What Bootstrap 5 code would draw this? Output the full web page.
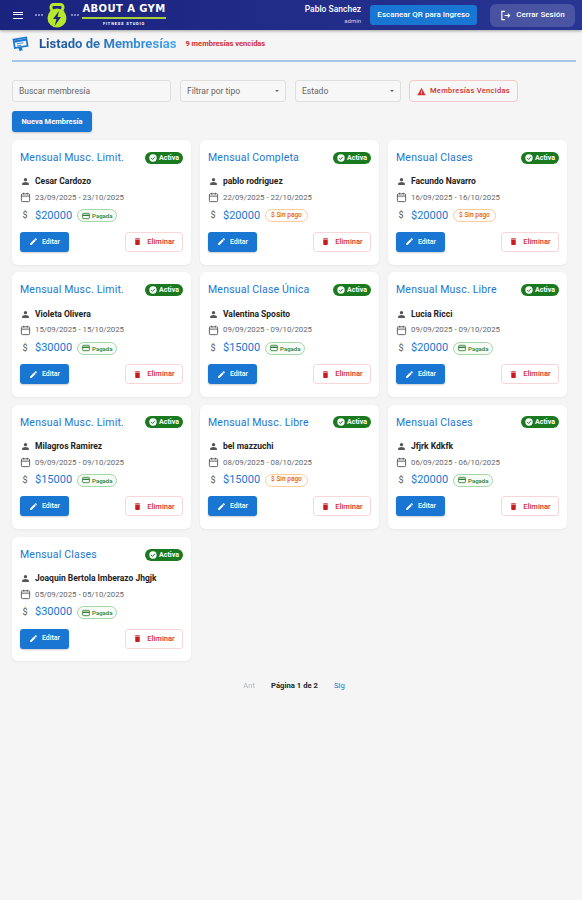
<!DOCTYPE html>
<html lang="es">
<head>
    <meta charset="UTF-8">
    <meta name="viewport" content="width=device-width, initial-scale=1.0">
    <title>Listado de Membresías</title>
    <link href="https://cdn.jsdelivr.net/npm/bootstrap@5.3.3/dist/css/bootstrap.min.css" rel="stylesheet">
    <style>
        body { background: #f5f5f5; font-family: Roboto, "Liberation Sans", sans-serif; min-height: 900px; }
        .barra-top { height: 30px; background: linear-gradient(90deg, #1a237e, #283593); box-shadow: 0 1px 3px rgba(0,0,0,.35); color: #fff; padding: 0 7px 0 13px; }
        .hamburguesa { width: 10px; height: 7px; border-top: 1.5px solid #fff; border-bottom: 1.5px solid #fff; position: relative; }
        .hamburguesa::after { content: ""; position: absolute; left: 0; right: 0; top: 1.5px; border-top: 1.5px solid #fff; }
        .logo-zona { margin-left: 12px; }
        .logo-etiqueta { width: 8px; border-top: 2px dotted #7f88c4; flex: none; }
        .logo-marca { width: 84px; margin-left: 3px; text-align: center; line-height: 1; }
        .logo-nombre { font-family: "DejaVu Sans", sans-serif; font-size: 10px; font-weight: 700; letter-spacing: .4px; white-space: nowrap; }
        .logo-linea { height: 2px; background: #a4cf3a; margin: 3px 0 3px; }
        .logo-sub { font-size: 4px; letter-spacing: .8px; font-weight: 700; }
        .usuario-txt { font-size: 8.500px; line-height: 11px; font-weight: 500; text-align: right; }
        .usuario-txt span { display: block; font-size: 6px; font-weight: 400; color: #cfd3ee; }
        .btn-qr { background: #1976d2; color: #fff; font-size: 8px; font-weight: 500; border-radius: 3px; height: 20px; width: 107px; margin-left: 9px; border: 0; padding: 0; }
        .btn-salir { background: rgba(255,255,255,.16); color: #fff; font-size: 8px; font-weight: 500; border-radius: 6px; height: 23px; width: 85px; margin-left: 13px; border: 0; padding: 0; gap: 5px; }
        .contenido { padding: 4px 6px 0 12px; }
        .titulo-fila { height: 20px; border-bottom: 2px solid #a9c6e8; padding-bottom: 6px; gap: 9px; box-sizing: content-box; margin-bottom: 18px; }
        .titulo-txt { font-size: 13.100px; font-weight: 700; margin: 0 0 0 1px; background: linear-gradient(90deg, #1a4f8f, #42a5f5); -webkit-background-clip: text; background-clip: text; color: transparent; }
        .vencidas-txt { font-size: 7.500px; font-weight: 700; color: #d32f2f; }
        .filtros { gap: 9px; margin-bottom: 9px; }
        .campo { height: 22px; background: #f7f7f7; border: 1px solid #dedede; border-radius: 3px; font-size: 8.500px; color: #666; padding: 0 6px; }
        .campo-buscar { width: 159px; }
        .campo-tipo { width: 106px; }
        .campo-estado { width: 106px; }
        .flechita { width: 0; height: 0; border-left: 2px solid transparent; border-right: 2px solid transparent; border-top: 2px solid #666; }
        .btn-vencidas { height: 22px; width: 109px; border: 1px solid #f3c9c9; border-radius: 4px; color: #d32f2f; font-size: 7.500px; font-weight: 500; letter-spacing: .3px; gap: 4px; background: #f7f7f7; margin-left: -1px; }
        .btn-nueva { background: #1976d2; color: #fff; font-size: 7.500px; font-weight: 700; height: 21px; width: 80px; border-radius: 3px; border: 0; padding: 0; box-shadow: 0 1px 2px rgba(0,0,0,.2); display: block; margin-bottom: 8px; }
        .grilla { display: grid; grid-template-columns: repeat(3, 179px); gap: 7.800px 9px; }
        .tarjeta { background: #fff; border-radius: 6px; height: 124.500px; padding: 10px 8px 0; box-shadow: 0 1px 3px rgba(0,0,0,.06); }
        .tarjeta-nombre { font-size: 10.500px; color: #1976d2; letter-spacing: .2px; }
        .estado-chip { background: #1b7a1f; color: #fff; font-size: 7px; font-weight: 700; height: 12px; width: 38px; border-radius: 6px; gap: 2px; }
        .dato { height: 16px; gap: 5px; }
        .dato-ico { width: 10px; flex: none; text-align: center; color: #555; font-size: 9px; line-height: 1; }
        .dato-persona { font-size: 8.500px; font-weight: 700; color: #222; }
        .dato-fecha { font-size: 7.800px; color: #666; }
        .dato-precio { height: 20px; margin-bottom: 6px; }
        .precio { font-size: 11px; color: #1976d2; }
        .chip-pago { height: 13px; border-radius: 7px; font-size: 6px; font-weight: 500; padding: 0 4px; gap: 2px; border: 1px solid #a5d6a7; color: #2e7d32; background: #f6fbf6; }
        .chip-pago.sin { border-color: #ffcc99; color: #e8590c; background: #fff; padding: 0 5px; font-size: 6.500px; }
        .btn-editar { background: #1976d2; color: #fff; width: 49px; height: 20px; border-radius: 3px; font-size: 7px; font-weight: 500; gap: 4px; box-shadow: 0 1px 2px rgba(0,0,0,.2); }
        .btn-eliminar { border: 1px solid #f8d7d7; color: #d32f2f; width: 58px; height: 20px; border-radius: 3px; font-size: 7.500px; font-weight: 500; gap: 5px; }
        .paginado { margin-top: 19px; gap: 16px; font-size: 7.700px; }
        .sig-link { color: #1976d2; }
    </style>
</head>
<body>
    <nav class="barra-top d-flex align-items-center">
        <div class="hamburguesa"></div>
        <div class="logo-zona d-flex align-items-center">
            <span class="logo-etiqueta"></span>
            <svg class="mx-1" width="20" height="25" viewBox="0 0 20 25">
                <path d="M5.500 9 4 5Q3.500 1.500 7 1.500h6q3.500 0 3 3.500L14.500 9" fill="none" stroke="#b7e82c" stroke-width="3"/>
                <circle cx="10" cy="15" r="9.500" fill="#b7e82c"/>
                <path d="M12 8 6 16h3.500l-2 7 6.500-9h-3.500z" fill="#1a237e"/>
            </svg>
            <span class="logo-etiqueta"></span>
            <div class="logo-marca">
                <div class="logo-nombre">ABOUT A GYM</div>
                <div class="logo-linea"></div>
                <div class="logo-sub">FITNESS STUDIO</div>
            </div>
        </div>
        <div class="ms-auto usuario-txt">Pablo Sanchez<span>admin</span></div>
        <button class="btn btn-qr">Escanear QR para Ingreso</button>
        <button class="btn btn-salir d-flex align-items-center justify-content-center">
            <svg width="11" height="11" viewBox="0 0 24 24" fill="none" stroke="#fff" stroke-width="2.500"><path d="M11 3H4v18h7M10 12h11M17 8l4 4-4 4"/></svg>
            Cerrar Sesión
        </button>
    </nav>

    <main class="contenido">
        <div class="titulo-fila d-flex align-items-center">
            <svg width="17" height="17" viewBox="0 0 24 24"><path d="M2 5 20 2l2 12-18 3z" fill="none" stroke="#1976d2" stroke-width="2.400"/><path d="M3 8 21 5" stroke="#1976d2" stroke-width="3"/><path d="M7 11l9-1.500M7 14l6-1" stroke="#1976d2" stroke-width="1.200"/><path d="M9 17l2 5 2-2 2 1-1-5z" fill="#1976d2"/></svg>
            <h1 class="titulo-txt">Listado de Membresías</h1>
            <span class="vencidas-txt">9 membresías vencidas</span>
        </div>

        <div class="filtros d-flex">
            <div class="campo campo-buscar d-flex align-items-center">Buscar membresía</div>
            <div class="campo campo-tipo d-flex align-items-center justify-content-between">Filtrar por tipo <i class="flechita"></i></div>
            <div class="campo campo-estado d-flex align-items-center justify-content-between">Estado <i class="flechita"></i></div>
            <div class="btn-vencidas d-flex align-items-center justify-content-center">
                <svg width="9" height="9" viewBox="0 0 24 24"><path d="M12 2 1 22h22z" fill="#d32f2f"/><path d="M11 9h2v7h-2zM11 17.500h2v2h-2z" fill="#fff"/></svg>
                Membresías Vencidas
            </div>
        </div>
        <button class="btn btn-nueva">Nueva Membresía</button>

        <div class="grilla" id="grilla"></div>

        <div class="paginado d-flex justify-content-center">
            <span class="text-secondary opacity-50">Ant</span>
            <strong>Página 1 de 2</strong>
            <span class="sig-link">Sig</span>
        </div>
    </main>

    <script src="https://cdn.jsdelivr.net/npm/bootstrap@5.3.3/dist/js/bootstrap.bundle.min.js"></script>
    <script>
        const membresias = [
            ['Mensual Musc. Limit.', 'Cesar Cardozo', '23/09/2025 - 23/10/2025', '$20000', true],
            ['Mensual Completa', 'pablo rodriguez', '22/09/2025 - 22/10/2025', '$20000', false],
            ['Mensual Clases', 'Facundo Navarro', '16/09/2025 - 16/10/2025', '$20000', false],
            ['Mensual Musc. Limit.', 'Violeta Olivera', '15/09/2025 - 15/10/2025', '$30000', true],
            ['Mensual Clase Única', 'Valentina Sposito', '09/09/2025 - 09/10/2025', '$15000', true],
            ['Mensual Musc. Libre', 'Lucia Ricci', '09/09/2025 - 09/10/2025', '$20000', true],
            ['Mensual Musc. Limit.', 'Milagros Ramirez', '09/09/2025 - 09/10/2025', '$15000', true],
            ['Mensual Musc. Libre', 'bel mazzuchi', '08/09/2025 - 08/10/2025', '$15000', false],
            ['Mensual Clases', 'Jfjrk Kdkfk', '06/09/2025 - 06/10/2025', '$20000', true],
            ['Mensual Clases', 'Joaquin Bertola Imberazo Jhgjk', '05/09/2025 - 05/10/2025', '$30000', true]
        ];

        const icoCheck = '<svg width="8" height="8" viewBox="0 0 24 24"><circle cx="12" cy="12" r="11" fill="#fff"/><path d="M6.500 12.500l4 4 7-8" fill="none" stroke="#1b7a1f" stroke-width="3"/></svg>';
        const icoPersona = '<svg width="9" height="9" viewBox="0 0 24 24" fill="#555"><circle cx="12" cy="7" r="4.500"/><path d="M3 21v-3c0-3 5-5 9-5s9 2 9 5v3z"/></svg>';
        const icoCalendario = '<svg width="11" height="11" viewBox="0 0 24 24" fill="none" stroke="#555" stroke-width="2"><rect x="3" y="4" width="18" height="17" rx="2"/><path d="M3 9h18M8 1.500v4M16 1.500v4"/></svg>';
        const icoLapiz = '<svg width="9" height="9" viewBox="0 0 24 24" fill="#fff"><path d="M3 17.300V21h3.700L18 9.700 14.300 6zM20.700 7a1 1 0 0 0 0-1.400l-2.300-2.300a1 1 0 0 0-1.400 0l-1.800 1.800 3.700 3.700z"/></svg>';
        const icoTacho = '<svg width="9" height="9" viewBox="0 0 24 24" fill="#c91c1c"><path d="M6 19a2 2 0 0 0 2 2h8a2 2 0 0 0 2-2V7H6zM19 4h-3.500l-1-1h-5l-1 1H5v2h14z"/></svg>';
        const icoPagada = '<svg width="8" height="8" viewBox="0 0 24 24" fill="none" stroke="#2e7d32" stroke-width="2.500"><rect x="2" y="4" width="20" height="16" rx="2"/><path d="M2 10h20" stroke-width="4"/></svg>';

        document.getElementById('grilla').innerHTML = membresias.map(m => `
            <article class="tarjeta">
                <div class="d-flex justify-content-between align-items-center mb-2">
                    <span class="tarjeta-nombre">${m[0]}</span>
                    <span class="estado-chip d-flex align-items-center justify-content-center">${icoCheck}Activa</span>
                </div>
                <div class="dato d-flex align-items-center"><span class="dato-ico">${icoPersona}</span><span class="dato-persona">${m[1]}</span></div>
                <div class="dato d-flex align-items-center"><span class="dato-ico">${icoCalendario}</span><span class="dato-fecha">${m[2]}</span></div>
                <div class="dato dato-precio d-flex align-items-center"><span class="dato-ico">$</span><span class="precio">${m[3]}</span>
                    ${m[4]
                        ? `<span class="chip-pago d-flex align-items-center">${icoPagada}Pagada</span>`
                        : `<span class="chip-pago sin d-flex align-items-center">$ Sin pago</span>`}
                </div>
                <div class="d-flex justify-content-between">
                    <span class="btn-editar d-flex align-items-center justify-content-center">${icoLapiz}Editar</span>
                    <span class="btn-eliminar d-flex align-items-center justify-content-center">${icoTacho}Eliminar</span>
                </div>
            </article>`).join('');
    </script>
</body>
</html>
